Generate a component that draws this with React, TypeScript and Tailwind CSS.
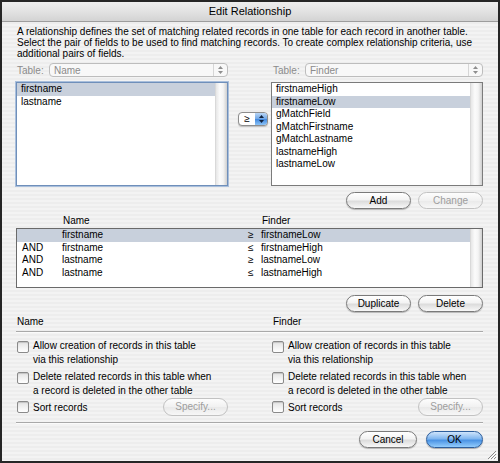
import clsx from 'clsx'

const leftFields = ['firstname', 'lastname']
const rightFields = [
  'firstnameHigh',
  'firstnameLow',
  'gMatchField',
  'gMatchFirstname',
  'gMatchLastname',
  'lastnameHigh',
  'lastnameLow',
]

const criteria = [
  { join: '', name: 'firstname', op: '≥', finder: 'firstnameLow' },
  { join: 'AND', name: 'firstname', op: '≤', finder: 'firstnameHigh' },
  { join: 'AND', name: 'lastname', op: '≥', finder: 'lastnameLow' },
  { join: 'AND', name: 'lastname', op: '≤', finder: 'lastnameHigh' },
]

function AquaButton({
  label,
  disabled,
  primary,
  className,
}: {
  label: string
  disabled?: boolean
  primary?: boolean
  className?: string
}) {
  return (
    <button
      type="button"
      className={clsx(
        'h-[17px] rounded-full border text-[10px] leading-none',
        primary
          ? 'border-[#2d5e9c] bg-[linear-gradient(180deg,#cfe4fb_0%,#80b6ef_45%,#4b93e4_55%,#93cdfd_100%)] text-black shadow-[0_1px_1px_rgba(0,0,0,0.3)]'
          : disabled
            ? 'border-[#c2c2c2] bg-[linear-gradient(180deg,#fdfdfd_0%,#f1f1f1_50%,#e9e9e9_51%,#f7f7f7_100%)] text-[#9d9d9d]'
            : 'border-[#7a7a7a] bg-[linear-gradient(180deg,#ffffff_0%,#f3f3f3_45%,#dcdcdc_55%,#f8f8f8_100%)] text-black shadow-[0_1px_1px_rgba(0,0,0,0.25)]',
        className,
      )}
    >
      {label}
    </button>
  )
}

function TablePopup({ value }: { value: string }) {
  return (
    <div className="flex h-[14px] items-center">
      <span className="w-[32px] text-[#8b8b8b]">Table:</span>
      <div className="flex h-full flex-1 items-center rounded-[4px] border border-[#bdbdbd] bg-[#f8f8f8]">
        <span className="flex-1 pl-[4px] text-[#8b8b8b]">{value}</span>
        <span className="flex h-full w-[14px] flex-col items-center justify-center gap-[2px] border-l border-[#d6d6d6]">
          <svg width="5" height="3" viewBox="0 0 5 3">
            <path d="M0 3 L2.5 0 L5 3 Z" fill="#8e8e8e" />
          </svg>
          <svg width="5" height="3" viewBox="0 0 5 3">
            <path d="M0 0 L2.5 3 L5 0 Z" fill="#8e8e8e" />
          </svg>
        </span>
      </div>
    </div>
  )
}

function ScrollTrack() {
  return (
    <div className="w-[12px] shrink-0 border-l border-[#d9d9d9] bg-[linear-gradient(90deg,#e6e6e6_0%,#fbfbfb_35%,#f4f4f4_65%,#cfcfcf_100%)]" />
  )
}

function FieldList({
  items,
  selected,
  focused,
}: {
  items: string[]
  selected: string
  focused?: boolean
}) {
  return (
    <div
      className={clsx(
        'flex h-[104px] border bg-white',
        focused
          ? 'border-[#6f8fba] shadow-[0_0_0_1px_#a9bfdc]'
          : 'border-[#7b7b7b]',
      )}
    >
      <div className="flex-1 pt-[0px]">
        {items.map((item) => (
          <div
            key={item}
            className={clsx(
              'h-[12.5px] pl-[4px] leading-[12.5px]',
              item === selected && 'bg-[#c8d0dc]',
            )}
          >
            {item}
          </div>
        ))}
      </div>
      <ScrollTrack />
    </div>
  )
}

function Check({ lines }: { lines: string[] }) {
  return (
    <div className="flex items-start gap-[4px] pl-[1px]">
      <span className="mt-[2px] h-[12px] w-[12px] shrink-0 rounded-[2px] border border-[#8a8a8a] bg-[linear-gradient(180deg,#e3e3e3,#ffffff)] shadow-[inset_0_1px_1px_rgba(0,0,0,0.15)]" />
      <div className="leading-[14px]">
        {lines.map((line) => (
          <div key={line}>{line}</div>
        ))}
      </div>
    </div>
  )
}

function OptionsColumn({ title }: { title: string }) {
  return (
    <div>
      <div className="flex flex-col">
        <Check lines={['Allow creation of records in this table', 'via this relationship']} />
        <div className="mt-[3px]">
          <Check
            lines={['Delete related records in this table when', 'a record is deleted in the other table']}
          />
        </div>
        <div className="flex h-[18px] items-center justify-between">
          <div className="flex items-center gap-[4px] pl-[1px]">
            <span className="h-[12px] w-[12px] shrink-0 rounded-[2px] border border-[#8a8a8a] bg-[linear-gradient(180deg,#e3e3e3,#ffffff)] shadow-[inset_0_1px_1px_rgba(0,0,0,0.15)]" />
            <span>Sort records</span>
          </div>
          <AquaButton label="Specify..." disabled className="h-[18px] w-[65px]" />
        </div>
      </div>
      <span className="hidden">{title}</span>
    </div>
  )
}

export default function App() {
  return (
    <div className="relative flex h-[463px] w-[500px] flex-col overflow-hidden border-2 border-[#262626] bg-[repeating-linear-gradient(180deg,#ededed_0px,#ededed_2px,#f3f3f3_2px,#f3f3f3_4px)] font-['Liberation_Sans',Arial,sans-serif] text-[10px] text-black">
      {/* title bar */}
      <div className="flex h-[20px] shrink-0 items-center justify-center border-b border-[#9d9d9d] bg-[linear-gradient(180deg,#eeeeee_0%,#e2e2e2_50%,#d3d3d3_100%)] pb-[1px] text-[11px]">
        Edit Relationship
      </div>

      <div className="flex flex-1 flex-col pl-[14px] pr-[15px]">
        <p className="mt-[4px] pl-[1px] leading-[11px]">
          A relationship defines the set of matching related records in one table for each record in another table.
          <br />
          Select the pair of fields to be used to find matching records. To create complex relationship criteria, use
          <br />
          additional pairs of fields.
        </p>

        <div className="mt-[4px] grid grid-cols-[212px_43px_212px]">
          <div className="pl-[1px]">
            <TablePopup value="Name" />
          </div>
          <div />
          <div className="pl-[2px]">
            <TablePopup value="Finder" />
          </div>
        </div>

        <div className="mt-[5px] grid grid-cols-[212px_43px_212px]">
          <FieldList items={leftFields} selected="firstname" focused />
          <div className="pl-[10px] pt-[30px]">
            <div className="flex h-[14px] w-[30px] overflow-hidden rounded-[4px] border border-[#8d8d8d] bg-white shadow-[0_1px_1px_rgba(0,0,0,0.2)]">
              <span className="flex w-[16px] items-center justify-center text-[10px] leading-none">≥</span>
              <span className="flex flex-1 flex-col items-center justify-center gap-[2px] bg-[linear-gradient(180deg,#b9d6f6_0%,#6fa6e6_50%,#3f86dd_51%,#8cc3f6_100%)]">
                <svg width="5" height="3" viewBox="0 0 5 3">
                  <path d="M0 3 L2.5 0 L5 3 Z" fill="#10223d" />
                </svg>
                <svg width="5" height="3" viewBox="0 0 5 3">
                  <path d="M0 0 L2.5 3 L5 0 Z" fill="#10223d" />
                </svg>
              </span>
            </div>
          </div>
          <FieldList items={rightFields} selected="firstnameLow" />
        </div>

        <div className="mt-[6px] flex justify-end gap-[7px]">
          <AquaButton label="Add" className="w-[65px]" />
          <AquaButton label="Change" disabled className="w-[65px]" />
        </div>

        <div className="mt-[6px] grid h-[12px] grid-cols-[46px_184px_15px_1fr] pl-[1px] leading-[12px]">
          <span />
          <span>Name</span>
          <span />
          <span>Finder</span>
        </div>

        <div className="mt-[1px] flex h-[60px] border border-[#6a6a6a] bg-white">
          <div className="flex-1">
            {criteria.map((row, i) => (
              <div
                key={i}
                className={clsx(
                  'grid h-[12.5px] grid-cols-[45px_184px_15px_1fr] leading-[12.5px]',
                  i === 0 && 'bg-[#c8d0dc]',
                )}
              >
                <span className="pl-[5px]">{row.join}</span>
                <span>{row.name}</span>
                <span className="pl-[2px]">{row.op}</span>
                <span>{row.finder}</span>
              </div>
            ))}
          </div>
          <ScrollTrack />
        </div>

        <div className="mt-[7px] flex justify-end gap-[7px]">
          <AquaButton label="Duplicate" className="w-[65px]" />
          <AquaButton label="Delete" className="w-[65px]" />
        </div>

        <div className="mt-[4px] grid h-[12px] grid-cols-[212px_43px_212px] leading-[12px]">
          <span className="pl-[1px]">Name</span>
          <span />
          <span className="pl-[2px]">Finder</span>
        </div>
        <div className="mt-[3px] h-[2px] border-t border-b border-t-[#a9a9a9] border-b-[#fbfbfb]" />

        <div className="mt-[6px] grid grid-cols-[212px_43px_212px]">
          <OptionsColumn title="Name" />
          <div />
          <OptionsColumn title="Finder" />
        </div>

        <div className="mt-[6px] h-[2px] border-t border-b border-t-[#a9a9a9] border-b-[#fbfbfb]" />

        <div className="mt-[7px] flex justify-end gap-[9px]">
          <AquaButton label="Cancel" className="w-[58px]" />
          <AquaButton label="OK" primary className="w-[57px]" />
        </div>
      </div>

      {/* resize grip */}
      <svg
        className="absolute bottom-[1px] right-[1px]"
        width="11"
        height="11"
        viewBox="0 0 11 11"
      >
        <path d="M10 2 L2 10 M10 5 L5 10 M10 8 L8 10" stroke="#8a8a8a" strokeWidth="1" />
        <path d="M11 3 L3 11 M11 6 L6 11 M11 9 L9 11" stroke="#ffffff" strokeWidth="1" />
      </svg>
    </div>
  )
}
